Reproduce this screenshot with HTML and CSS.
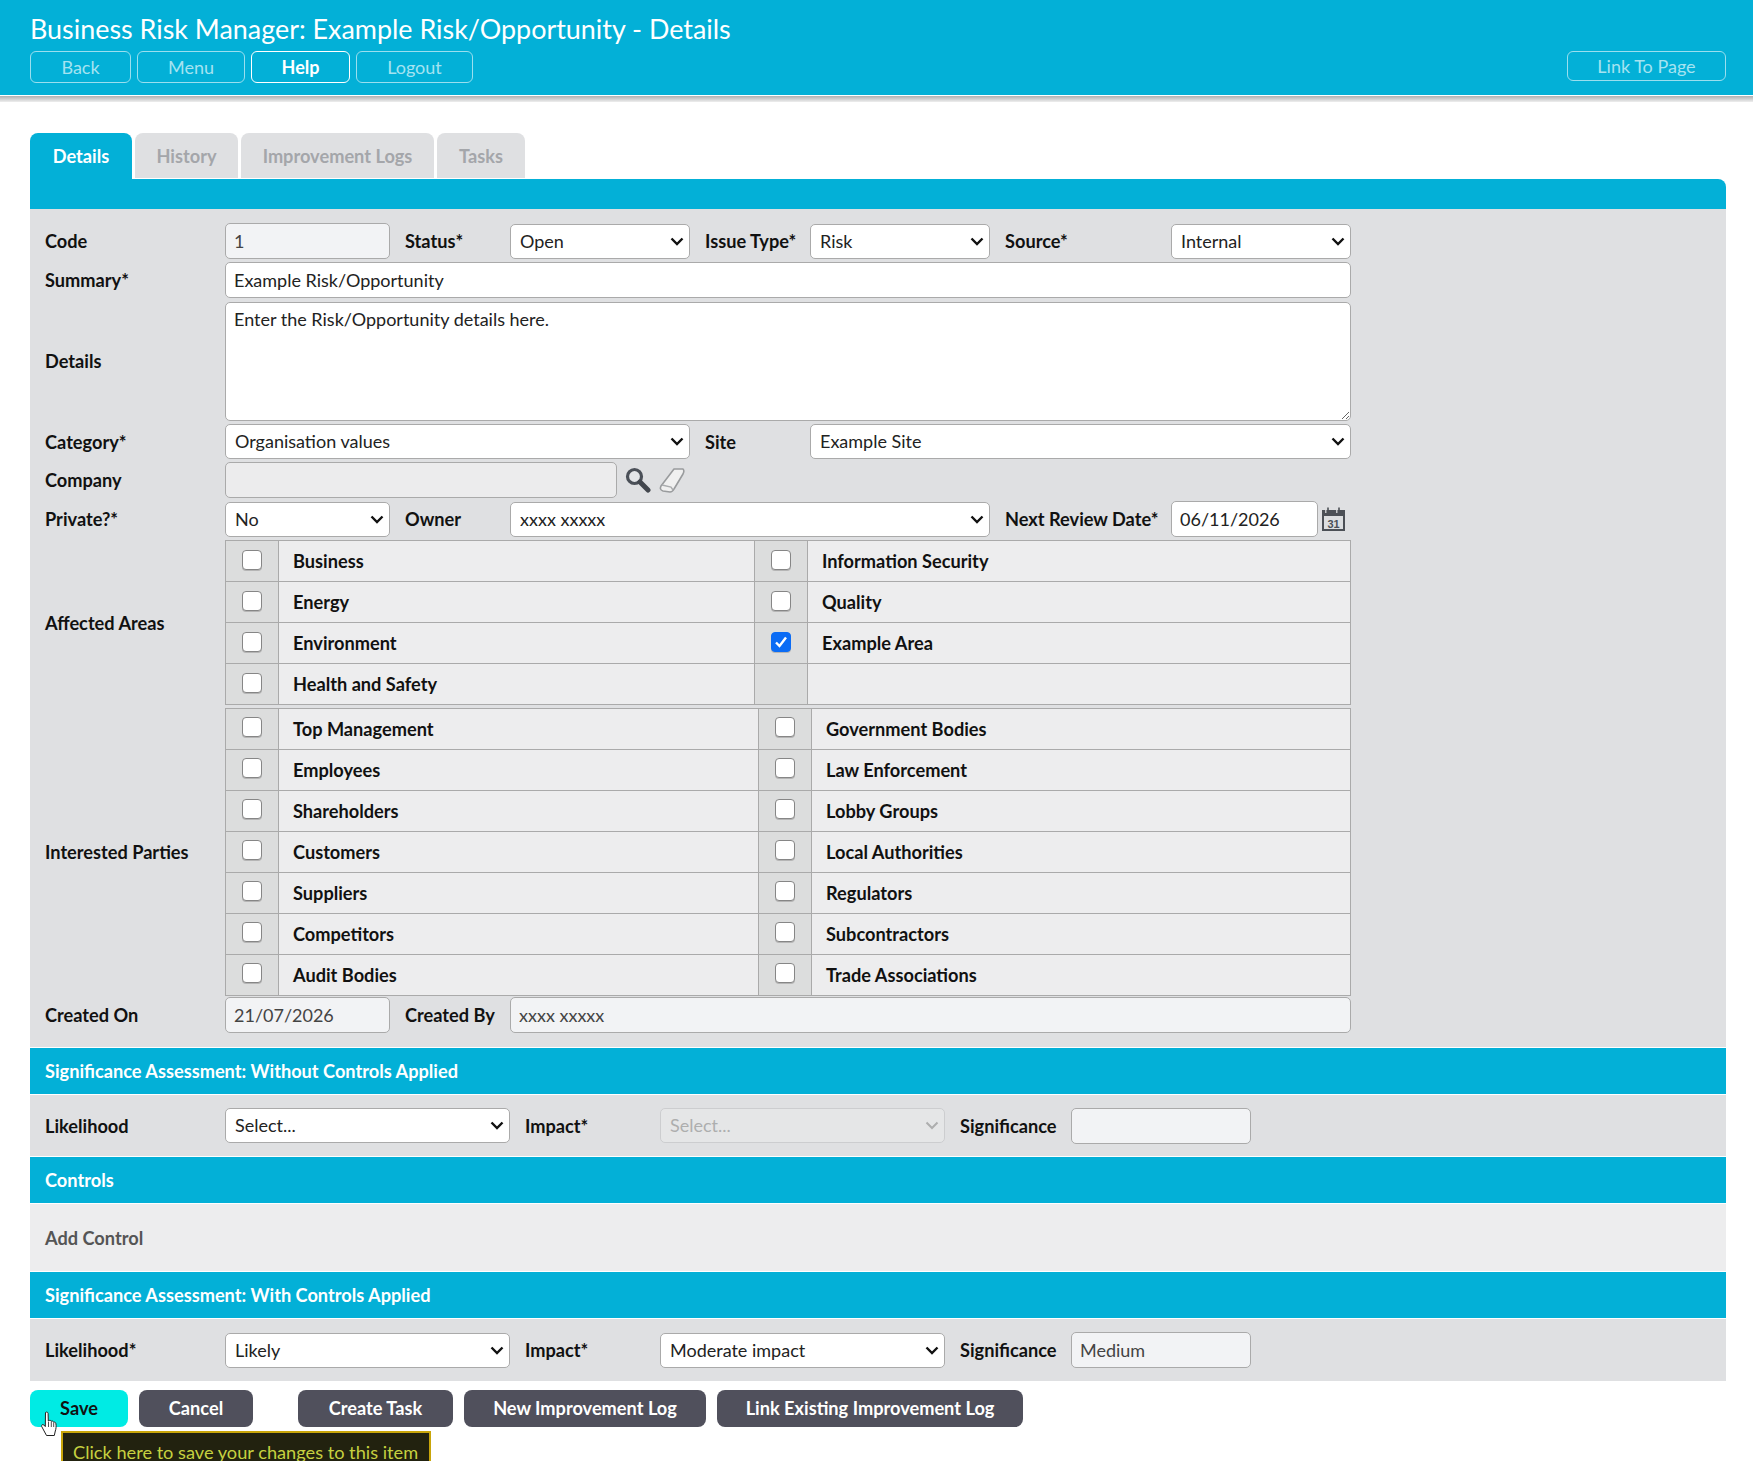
FILE: index.html
```html
<!DOCTYPE html>
<html lang="en">
<head>
    <meta charset="UTF-8">
    <title>Business Risk Manager</title>
    <link rel="stylesheet" href="styles.css">
</head>
<body>
    <header class="top-bar">
        <h1>Business Risk Manager: Example Risk/Opportunity - Details</h1>
        <nav class="top-nav">
            <a class="nav-btn nav-back" href="#">Back</a>
            <a class="nav-btn nav-menu" href="#">Menu</a>
            <a class="nav-btn nav-help" href="#">Help</a>
            <a class="nav-btn nav-logout" href="#">Logout</a>
            <a class="nav-btn nav-link" href="#">Link To Page</a>
        </nav>
    </header>
    <div class="top-shadow"></div>

    <main class="page">
        <ul class="tabs">
            <li class="tab tab-active tab-details">Details</li>
            <li class="tab tab-history">History</li>
            <li class="tab tab-logs">Improvement Logs</li>
            <li class="tab tab-tasks">Tasks</li>
        </ul>
        <div class="tab-strip"></div>

        <form class="details-form">
            <label class="lbl">Code</label>
            <input class="field ro" type="text" value="1" readonly>
            <label class="lbl">Status*</label>
            <select class="field"><option>Open</option></select>
            <label class="lbl">Issue Type*</label>
            <select class="field"><option>Risk</option></select>
            <label class="lbl">Source*</label>
            <select class="field"><option>Internal</option></select>

            <label class="lbl">Summary*</label>
            <input class="field span-7" type="text" value="Example Risk/Opportunity">

            <label class="lbl">Details</label>
            <textarea class="field span-7 details-text">Enter the Risk/Opportunity details here.</textarea>

            <label class="lbl">Category*</label>
            <select class="field span-3"><option>Organisation values</option></select>
            <label class="lbl">Site</label>
            <select class="field span-3"><option>Example Site</option></select>

            <label class="lbl">Company</label>
            <div class="span-7 company-row">
                <input class="field ro-dark company-input" type="text" readonly>
                <svg class="icon-search" width="26" height="26" viewBox="0 0 26 26">
                    <circle cx="9.5" cy="9.5" r="7" fill="#e3e5e8" stroke="#4b5058" stroke-width="3.2"/>
                    <path d="M15 15 L23 23" stroke="#43474e" stroke-width="5" stroke-linecap="round"/>
                </svg>
                <svg class="icon-eraser" width="26" height="26" viewBox="0 0 26 26">
                    <path d="M15 2 L24 2 C25 3 25 5 24 7 L15 22 C14 24 13 25 11 25 L4 24 C1 23 1 21 2 19 Z" fill="#f0f0f0" stroke="#999b9d" stroke-width="1.6" stroke-linejoin="round"/>
                    <path d="M3 18 L12 20 L14 23" fill="none" stroke="#aaacae" stroke-width="1.4"/>
                </svg>
            </div>

            <label class="lbl">Private?*</label>
            <select class="field"><option>No</option></select>
            <label class="lbl">Owner</label>
            <select class="field span-3"><option>xxxx xxxxx</option></select>
            <label class="lbl">Next Review Date*</label>
            <div class="date-row">
                <input class="field date-input" type="text" value="06/11/2026">
                <svg class="icon-cal" width="25" height="25" viewBox="0 0 25 25">
                    <rect x="1" y="3" width="23" height="21" fill="#4c5056"/>
                    <rect x="3" y="9" width="19" height="13" fill="#dcdee0"/>
                    <path d="M7 0.5 V5 M18 0.5 V5" stroke="#4c5056" stroke-width="1.6"/>
                    <path d="M4.8 3 V6 M15.8 3 V6" stroke="#dfe0e2" stroke-width="1.2"/>
                    <text x="12.5" y="20.5" text-anchor="middle" class="cal-day">31</text>
                </svg>
            </div>

            <label class="lbl">Affected Areas</label>
            <table class="checks span-7 checks-areas">
                <tr>
                    <td class="box"><input type="checkbox"></td><td>Business</td>
                    <td class="box"><input type="checkbox"></td><td>Information Security</td>
                </tr>
                <tr>
                    <td class="box"><input type="checkbox"></td><td>Energy</td>
                    <td class="box"><input type="checkbox"></td><td>Quality</td>
                </tr>
                <tr>
                    <td class="box"><input type="checkbox"></td><td>Environment</td>
                    <td class="box"><input type="checkbox" checked></td><td>Example Area</td>
                </tr>
                <tr>
                    <td class="box"><input type="checkbox"></td><td>Health and Safety</td>
                    <td class="box"></td><td></td>
                </tr>
            </table>

            <label class="lbl">Interested Parties</label>
            <table class="checks span-7 checks-parties">
                <tr>
                    <td class="box"><input type="checkbox"></td><td>Top Management</td>
                    <td class="box"><input type="checkbox"></td><td>Government Bodies</td>
                </tr>
                <tr>
                    <td class="box"><input type="checkbox"></td><td>Employees</td>
                    <td class="box"><input type="checkbox"></td><td>Law Enforcement</td>
                </tr>
                <tr>
                    <td class="box"><input type="checkbox"></td><td>Shareholders</td>
                    <td class="box"><input type="checkbox"></td><td>Lobby Groups</td>
                </tr>
                <tr>
                    <td class="box"><input type="checkbox"></td><td>Customers</td>
                    <td class="box"><input type="checkbox"></td><td>Local Authorities</td>
                </tr>
                <tr>
                    <td class="box"><input type="checkbox"></td><td>Suppliers</td>
                    <td class="box"><input type="checkbox"></td><td>Regulators</td>
                </tr>
                <tr>
                    <td class="box"><input type="checkbox"></td><td>Competitors</td>
                    <td class="box"><input type="checkbox"></td><td>Subcontractors</td>
                </tr>
                <tr>
                    <td class="box"><input type="checkbox"></td><td>Audit Bodies</td>
                    <td class="box"><input type="checkbox"></td><td>Trade Associations</td>
                </tr>
            </table>

            <label class="lbl lbl-created">Created On</label>
            <input class="field ro created" type="text" value="21/07/2026" readonly>
            <label class="lbl lbl-created">Created By</label>
            <input class="field ro created span-5" type="text" value="xxxx xxxxx" readonly>
        </form>

        <h2 class="section-head">Significance Assessment: Without Controls Applied</h2>
        <div class="assess-row">
            <label class="lbl assess-lbl">Likelihood</label>
            <select class="field assess-select"><option>Select...</option></select>
            <label class="lbl impact-lbl">Impact*</label>
            <select class="field assess-select" disabled><option>Select...</option></select>
            <label class="lbl sig-lbl">Significance</label>
            <input class="field ro sig-input" type="text" readonly>
        </div>

        <h2 class="section-head">Controls</h2>
        <div class="controls-row">Add Control</div>

        <h2 class="section-head">Significance Assessment: With Controls Applied</h2>
        <div class="assess-row assess-last">
            <label class="lbl assess-lbl">Likelihood*</label>
            <select class="field assess-select"><option>Likely</option></select>
            <label class="lbl impact-lbl">Impact*</label>
            <select class="field assess-select"><option>Moderate impact</option></select>
            <label class="lbl sig-lbl">Significance</label>
            <input class="field ro sig-input" type="text" value="Medium" readonly>
        </div>

        <div class="actions">
            <button class="act act-save" type="button">Save</button>
            <button class="act act-cancel" type="button">Cancel</button>
            <button class="act act-task" type="button">Create Task</button>
            <button class="act act-new" type="button">New Improvement Log</button>
            <button class="act act-link" type="button">Link Existing Improvement Log</button>
        </div>
    </main>

    <div class="tooltip">Click here to save your changes to this item</div>
    <svg class="hand-cursor" width="19" height="26" viewBox="0 0 18 26">
        <path d="M5 1.5 C6 0.7 7.4 1 7.6 2.5 L7.8 10 L8.3 10 C9 9 10.3 9 10.7 10.4 C11.5 9.6 12.8 10 13 11.3 C13.9 10.8 15.2 11.2 15.4 12.6 C15.8 15 15.6 18 14.8 20 L13.8 24.5 L6 24.5 L1.2 15.5 C0.6 14 2.3 12.8 3.4 14 L4.8 15.6 Z" fill="#fff" stroke="#222" stroke-width="1" stroke-linejoin="round"/>
        <path d="M8 11 V16 M10.8 11 V16 M13.2 12 V16" stroke="#222" stroke-width="0.8" fill="none"/>
    </svg>
</body>
</html>
```

FILE: styles.css
```css
html, body {
    margin: 0;
    padding: 0;
    height: 1461px;
    overflow: hidden;
}

body {
    position: relative;
    font-family: "Lato", sans-serif;
    font-size: 18px;
    color: #111;
    background-color: #fff;
}

/* top bar */
.top-bar {
    background-color: #03b0d7;
    height: 95px;
    padding: 0 27px 0 30px;
    box-sizing: border-box;
}

.top-bar h1 {
    margin: 0;
    padding-top: 13px;
    height: 51px;
    box-sizing: border-box;
    font-size: 26.9px;
    line-height: 32px;
    font-weight: 400;
    color: #fff;
    white-space: nowrap;
}

.top-nav {
    display: flex;
    gap: 6px;
    align-items: flex-start;
}

.nav-btn {
    height: 32px;
    box-sizing: border-box;
    border: 1px solid #9adfef;
    border-radius: 6px;
    color: #a5e3f1;
    text-align: center;
    line-height: 30px;
    text-decoration: none;
}

.nav-back { width: 101px; }
.nav-menu { width: 108px; }
.nav-help { width: 99px; color: #fff; border-color: #fff; font-weight: 700; }
.nav-logout { width: 117px; }
.nav-link { width: 159px; height: 30px; line-height: 28px; margin-left: auto; }

.top-shadow {
    height: 7px;
    border-top: 1px solid #fff;
    box-sizing: border-box;
    background: linear-gradient(#aeb0b2, #eeeeee);
}

/* tabs */
.page {
    padding: 31px 27px 0 30px;
}

.tabs {
    list-style: none;
    display: flex;
    gap: 3px;
    margin: 0;
    padding: 0;
    height: 46px;
}

.tab {
    box-sizing: border-box;
    height: 45px;
    background-color: #dfe0e2;
    color: #a4a6aa;
    font-size: 18.2px;
    font-weight: 700;
    text-align: center;
    line-height: 46px;
    border-radius: 8px 8px 0 0;
}

.tab-active {
    height: 46px;
    background-color: #03b0d7;
    color: #fff;
}

.tab-details { width: 102px; }
.tab-history { width: 103px; }
.tab-logs { width: 193px; }
.tab-tasks { width: 88px; }

.tab-strip {
    height: 30px;
    background-color: #03b0d7;
    border-radius: 0 8px 0 0;
}

/* main form */
.details-form {
    display: grid;
    grid-template-columns: 195px 165px 120px 180px 120px 180px 181px 180px;
    row-gap: 3px;
    padding: 14px 0 14px;
    background-color: #dfe0e2;
    border-bottom: 1px solid #fff;
}

.lbl {
    padding-left: 15px;
    align-self: center;
    font-size: 18.2px;
    font-weight: 700;
    color: #111;
    white-space: nowrap;
}

.field {
    box-sizing: border-box;
    height: 36px;
    width: 100%;
    border: 1px solid #aaa;
    border-radius: 5px;
    background-color: #fff;
    color: #222;
    font-family: "Lato", sans-serif;
    font-size: 18px;
    padding: 0 8px;
    margin: 0;
}

select.field {
    appearance: none;
    height: 35px;
    padding: 0 26px 1px 9px;
    align-self: end;
    background-image: url("data:image/svg+xml,%3Csvg xmlns='http://www.w3.org/2000/svg' width='14' height='9'%3E%3Cpath d='M1.5 1.5 L7 7 L12.5 1.5' fill='none' stroke='%23111' stroke-width='2.4'/%3E%3C/svg%3E");
    background-repeat: no-repeat;
    background-position: right 5px top 12px;
}

.ro { background-color: #f2f3f5; color: #444; }
.ro-dark { background-color: #ececed; }
.span-3 { grid-column: span 3; }
.span-5 { grid-column: span 5; }
.span-7 { grid-column: span 7; }

.details-text {
    height: 119px;
    margin-top: 1px;
    padding: 5px 8px;
    line-height: 22px;
}

.company-row {
    display: flex;
    align-items: center;
    gap: 8px;
}

.company-input { width: 392px; }

.date-row {
    display: flex;
    align-items: center;
    gap: 3px;
}

.date-input { width: 147px; }

.icon-cal { flex: none; }

.cal-day {
    font-family: "Liberation Sans", sans-serif;
    font-size: 11px;
    font-weight: 700;
    fill: #4c5056;
}

/* check tables */
.checks {
    border-collapse: collapse;
    width: 1126px;
    table-layout: fixed;
    font-size: 18.2px;
    font-weight: 700;
}

.checks td {
    height: 41px;
    padding: 0 0 0 14px;
    box-sizing: border-box;
    border: 1px solid #aaa;
    background-color: #ededee;
}

.checks td.box {
    padding: 0;
    text-align: center;
    background-color: #dcdddd;
}

.checks input {
    appearance: none;
    box-sizing: border-box;
    width: 20px;
    height: 20px;
    margin: 0 0 3px;
    vertical-align: middle;
    border: 1px solid #868686;
    border-radius: 4px;
    background-color: #fff;
    box-shadow: 0 1px 0 #b5b5b5;
}

.checks input:checked {
    border-color: #0b6cf5;
    background-color: #0b6cf5;
    background-image: url("data:image/svg+xml,%3Csvg xmlns='http://www.w3.org/2000/svg' width='18' height='18'%3E%3Cpath d='M4 9.5 L7.5 13 L14 4.5' fill='none' stroke='%23fff' stroke-width='2.4'/%3E%3C/svg%3E");
    background-repeat: no-repeat;
    background-position: center;
}

.checks-areas td:nth-child(1),
.checks-areas td:nth-child(3) { width: 53px; }
.checks-areas td:nth-child(2) { width: 476px; }

.checks-parties td:nth-child(1),
.checks-parties td:nth-child(3) { width: 53px; }
.checks-parties td:nth-child(2) { width: 480px; }

.checks-parties input { margin-bottom: 5px; }
.created { margin-top: -2px; }
.lbl-created { margin-top: -2px; }

/* section bars */
.section-head {
    margin: 0;
    height: 46px;
    padding-left: 15px;
    background-color: #03b0d7;
    color: #fff;
    font-size: 18.2px;
    line-height: 46px;
    font-weight: 700;
    border-bottom: 1px solid #fff;
}

.assess-row {
    display: flex;
    align-items: center;
    height: 61px;
    background-color: #dfe0e2;
    border-bottom: 1px solid #fff;
}

.assess-last { height: 62px; }

.assess-lbl { width: 180px; }
.impact-lbl { width: 135px; }
.sig-lbl { width: 111px; }

select.assess-select {
    flex: none;
    width: 285px;
    align-self: center;
}

.sig-input { width: 180px; }

select:disabled {
    background-color: #e8e9ea;
    background-image: url("data:image/svg+xml,%3Csvg xmlns='http://www.w3.org/2000/svg' width='14' height='9'%3E%3Cpath d='M1.5 1.5 L7 7 L12.5 1.5' fill='none' stroke='%23999' stroke-width='2'/%3E%3C/svg%3E");
    color: #999;
    border-color: #c4c5c7;
}

.controls-row {
    height: 67px;
    padding-left: 15px;
    line-height: 68px;
    background-color: #ededee;
    font-size: 18.2px;
    font-weight: 700;
    color: #555;
    border-bottom: 1px solid #fff;
}

/* buttons */
.actions {
    display: flex;
    gap: 11px;
    margin-top: 8px;
}

.act {
    height: 37px;
    border: 0;
    border-radius: 8px;
    background-color: #50505c;
    color: #fff;
    font-family: "Lato", sans-serif;
    font-size: 18.2px;
    font-weight: 700;
    padding: 0 0 2px;
}

.act-save { width: 98px; background-color: #00ebe4; color: #111; }
.act-cancel { width: 114px; margin-right: 34px; }
.act-task { width: 155px; }
.act-new { width: 242px; }
.act-link { width: 306px; }

.tooltip {
    position: absolute;
    left: 61px;
    top: 1431px;
    width: 370px;
    height: 44px;
    box-sizing: border-box;
    border: 2px solid #c8a50a;
    background-color: #22220f;
    color: #c6d140;
    padding-left: 10px;
    font-size: 18.2px;
    line-height: 38px;
    white-space: nowrap;
}

.hand-cursor {
    position: absolute;
    left: 40px;
    top: 1411px;
}
```
